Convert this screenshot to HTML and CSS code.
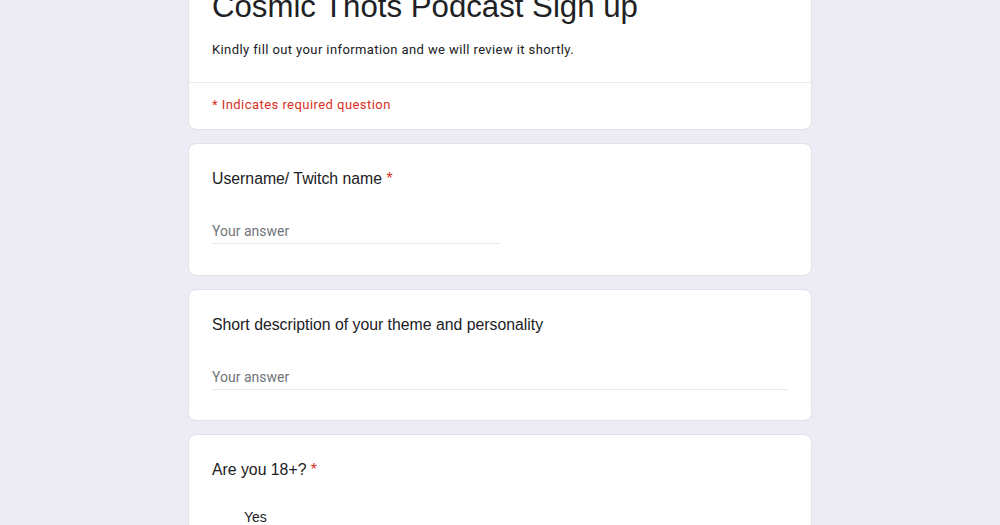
FILE: index.html
```html
<!DOCTYPE html>
<html>
<head>
<meta charset="utf-8">
<link rel="stylesheet" href="styles.css">
</head>
<body>
<div class="form">
  <div class="card header-card">
    <div class="header-main">
      <h1 class="form-title">Cosmic Thots Podcast Sign up</h1>
      <p class="form-desc">Kindly fill out your information and we will review it shortly.</p>
    </div>
    <div class="header-req">* Indicates required question</div>
  </div>

  <div class="card question q-first">
    <div class="q-title">Username/ Twitch name <span class="star">*</span></div>
    <div class="answer short">Your answer</div>
  </div>

  <div class="card question">
    <div class="q-title">Short description of your theme and personality</div>
    <div class="answer long">Your answer</div>
  </div>

  <div class="card question">
    <div class="q-title">Are you 18+? <span class="star">*</span></div>
    <div class="options">
      <div class="option">Yes</div>
    </div>
  </div>
</div>
</body>
</html>
```

FILE: styles.css
```css
html, body {
  margin: 0;
  padding: 0;
  background: #edecf5;
  overflow: hidden;
}

.form {
  width: 624px;
  margin: -35px auto 0;
  display: flex;
  flex-direction: column;
  gap: 13px;
}

.card {
  background: #ffffff;
  border: 1px solid #e2e1ea;
  border-radius: 8px;
  box-sizing: border-box;
}

.header-main {
  padding: 21px 23px 22px;
  border-bottom: 1px solid #ebebeb;
}

.form-title {
  margin: 0;
  font-family: "Liberation Sans", Arial, sans-serif;
  font-weight: 400;
  font-size: 31.2px;
  line-height: 40px;
  color: #202124;
}

.form-desc {
  margin: 13px 0 0;
  font-family: Roboto, "Liberation Sans", sans-serif;
  font-size: 13px;
  line-height: 20px;
  letter-spacing: 0.4px;
  color: #202124;
}

.header-req {
  padding: 12px 23px 14px;
  font-family: Roboto, "Liberation Sans", sans-serif;
  font-size: 13px;
  line-height: 20px;
  letter-spacing: 0.45px;
  color: #d93025;
}

.question {
  padding: 23px 23px 30px;
}

.q-first {
  padding-bottom: 31px;
}

.q-title {
  font-family: "Liberation Sans", Arial, sans-serif;
  font-size: 15.8px;
  line-height: 24px;
  color: #202124;
}

.star {
  color: #d93025;
}

.answer {
  margin-top: 30px;
  padding-bottom: 2px;
  border-bottom: 1px solid #e8e8ec;
  font-family: Roboto, "Liberation Sans", sans-serif;
  font-size: 14px;
  line-height: 20px;
  letter-spacing: 0;
  color: #70757a;
}

.answer.short {
  width: 288px;
}

.options {
  margin-top: 25px;
  padding-left: 32px;
}

.option {
  font-family: "Liberation Sans", Arial, sans-serif;
  font-size: 14px;
  line-height: 20px;
  color: #202124;
}
```
